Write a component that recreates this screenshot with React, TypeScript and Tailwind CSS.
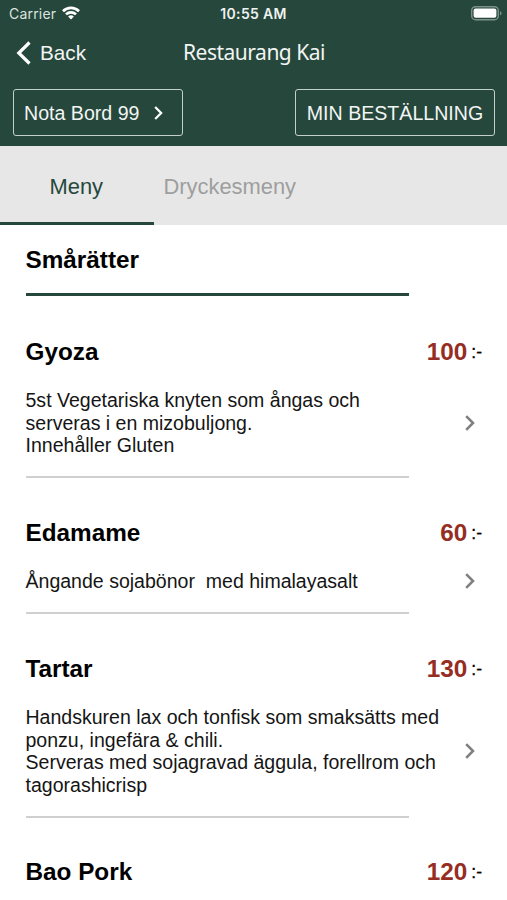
import { useState } from "react";

interface Dish {
    name: string;
    price: number;
    description: string[];
}

const dishes: Dish[] = [
    {
        name: "Gyoza",
        price: 100,
        description: ["5st Vegetariska knyten som ångas och", "serveras i en mizobuljong.", "Innehåller Gluten"],
    },
    {
        name: "Edamame",
        price: 60,
        description: ["Ångande sojabönor  med himalayasalt"],
    },
    {
        name: "Tartar",
        price: 130,
        description: [
            "Handskuren lax och tonfisk som smaksätts med",
            "ponzu, ingefära & chili.",
            "Serveras med sojagravad äggula, forellrom och",
            "tagorashicrisp",
        ],
    },
    {
        name: "Bao Pork",
        price: 120,
        description: [],
    },
];

const Chevron = ({ className }: { className: string }) => (
    <svg viewBox="0 0 10 16" fill="none" stroke="currentColor" strokeWidth="2.6" className={className}>
        <path d="M1.2 1.2 8 8l-6.8 6.8" />
    </svg>
);

const StatusBar = () => (
    <div className="grid grid-cols-3 items-center h-7 pl-[9px] pr-[5px] font-['Inter',sans-serif] text-[14px] leading-7">
        <div className="flex items-center gap-[6px]">
            <span className="tracking-[0.2px] text-[#dbe3df]">Carrier</span>
            <svg viewBox="0 0 18 14" fill="none" stroke="white" strokeWidth="2.7" className="w-[18px] h-[14px] -mt-[2px]">
                <path d="M1 5.2a11.5 11.5 0 0 1 16 0" />
                <path d="M4 8.4a7.2 7.2 0 0 1 10 0" />
                <path d="M9 13.6 6.1 10.6a4.2 4.2 0 0 1 5.8 0z" fill="white" stroke="none" />
            </svg>
        </div>
        <span className="text-center font-semibold whitespace-nowrap tracking-[0.3px] pr-1 text-[#eef2f0]">10:55 AM</span>
        <svg viewBox="0 0 31 15" className="w-[31px] h-[15px] justify-self-end -mt-[2px]">
            <rect x="0.7" y="0.7" width="26.6" height="13" rx="3.8" fill="none" stroke="#7d9189" strokeWidth="1.4" />
            <rect x="2.6" y="2.6" width="22.8" height="9.2" rx="2" fill="white" />
            <path d="M29 5v4.5q1.5-.6 1.5-2.2T29 5z" fill="#7d9189" />
        </svg>
    </div>
);

const DishRow = ({ dish }: { dish: Dish }) => (
    <div className="pl-[25.5px] pr-[25px]">
        <div className="flex justify-between items-center h-7">
            <h2 className="text-[24.3px] leading-7 font-bold">{dish.name}</h2>
            <p className="flex items-center leading-7">
                <span className="text-[24.3px] font-bold text-[#962d22]">{dish.price}</span>
                <span className="text-[17.5px] ml-[4px] [-webkit-text-stroke:0.3px_black]">:-</span>
            </p>
        </div>
        {dish.description.length > 0 && (
            <>
                <div className="flex justify-between items-center mt-[23.75px] pr-[7px]">
                    <div className="text-[19.55px] leading-[22.5px] whitespace-pre text-[#151515]">
                        {dish.description.map((line) => (
                            <p key={line}>{line}</p>
                        ))}
                    </div>
                    <Chevron className="w-[10px] h-4 shrink-0 -mt-px text-[#808080]" />
                </div>
                <div className="mt-[19.25px] mb-[40.5px] h-[2px] w-[383px] bg-[#d0d0d0]" />
            </>
        )}
    </div>
);

const App = () => {
    const [tab, setTab] = useState("Meny");

    return (
        <div className="h-[900px] w-[507px] overflow-hidden bg-white font-['Liberation_Sans',Arial,sans-serif] text-black">
            <header className="h-[146px] bg-[#26473c] text-[#f2f5f3]">
                <StatusBar />
                <div className="grid grid-cols-[1fr_auto_1fr] items-center h-[50px] pl-4 pr-[15px]">
                    <button className="flex items-center gap-[9px] text-[20.7px] leading-6">
                        <svg viewBox="0 0 15 24" fill="none" stroke="white" strokeWidth="3.2" className="w-[15px] h-6 -mt-px">
                            <path d="M13.5 1.5 2.8 12l10.7 10.5" />
                        </svg>
                        Back
                    </button>
                    <h1 className="font-['Noto_Sans',sans-serif] text-[21px] leading-6 tracking-[-0.5px] -mt-[3px]">Restaurang Kai</h1>
                </div>
                <div className="flex justify-between pt-[11px] pl-[13px] pr-3 text-[19.6px]">
                    <button className="flex items-center h-[47px] w-[170px] rounded-[3px] border-[1.5px] border-[#c3d0ca] pl-[10px] pt-[2px]">
                        Nota Bord 99
                        <Chevron className="ml-[15px] w-[9px] h-[14px] text-white -mt-[2px]" />
                    </button>
                    <button className="h-[47px] w-[200px] rounded-[3px] border-[1.5px] border-[#c3d0ca] whitespace-nowrap pt-[2px]">
                        MIN BESTÄLLNING
                    </button>
                </div>
            </header>

            <nav className="flex h-[79px] bg-[#e7e7e7] text-[21.9px]">
                {["Meny", "Dryckesmeny"].map((name) => (
                    <button
                        key={name}
                        onClick={() => setTab(name)}
                        className={`w-[153.5px] pt-[7px] pr-px border-b-[3.5px] ${tab === name ? "border-[#26473c] text-[#26473c]" : "border-transparent text-[#9e9e9e]"}`}
                    >
                        {name}
                    </button>
                ))}
            </nav>

            <main>
                <h2 className="pl-[25.5px] pt-[21px] text-[24.3px] leading-7 font-bold">Smårätter</h2>
                <div className="ml-[25.5px] mt-[19px] mb-[41.5px] h-[3px] w-[383px] bg-[#26473c]" />
                {dishes.map((dish) => (
                    <DishRow key={dish.name} dish={dish} />
                ))}
            </main>
        </div>
    );
};

export default App;
